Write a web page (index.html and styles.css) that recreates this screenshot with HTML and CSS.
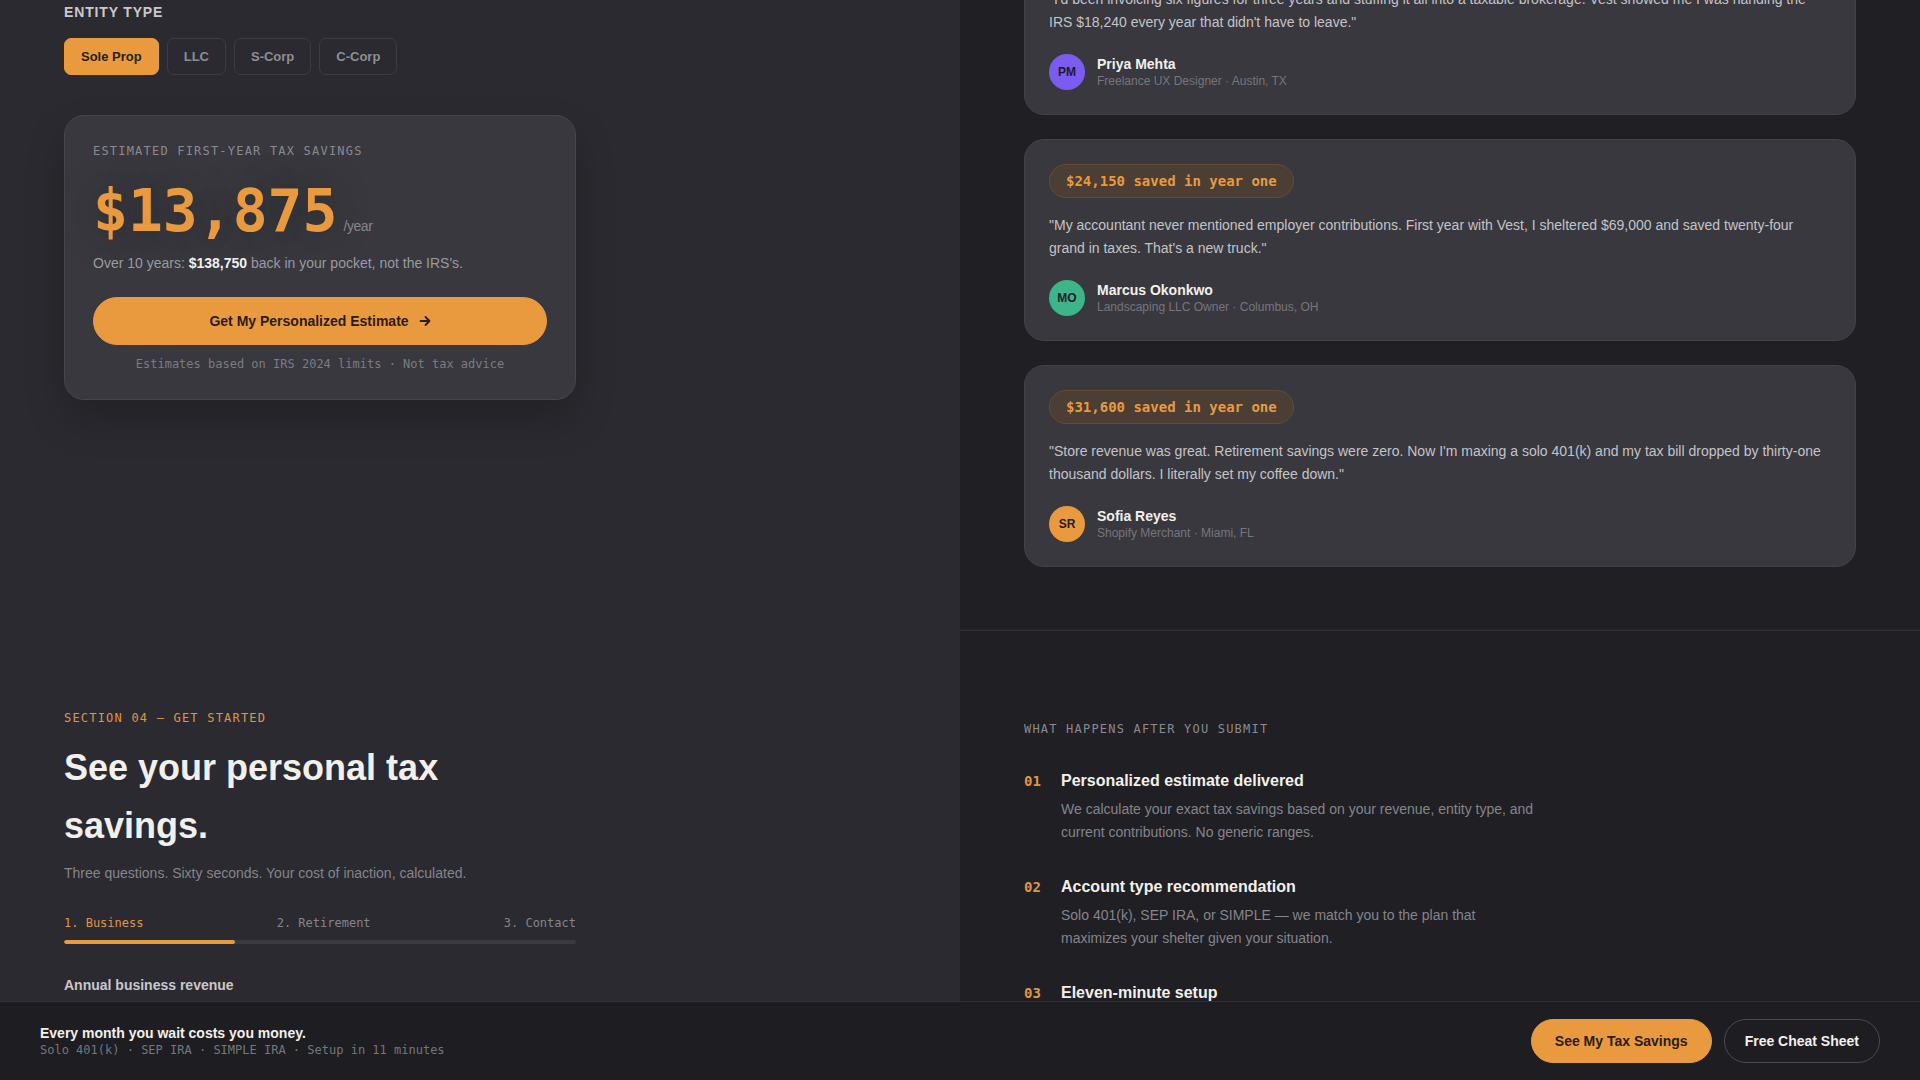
FILE: index.html
```html
<!DOCTYPE html>
<html lang="en">

<head>
  <meta charset="UTF-8">
  <meta name="viewport" content="width=device-width, initial-scale=1.0">
  <title>Vest - Retirement plans for the self-employed</title>
  <link rel="stylesheet" href="styles.css">
</head>

<body>
  <main class="page">
    <!-- Calculator + testimonials -->
    <section class="split">
      <div class="col col-light col-calc">
        <div class="field">
          <span class="field-label">Entity type</span>
          <div class="pills">
            <button class="pill is-active">Sole Prop</button>
            <button class="pill">LLC</button>
            <button class="pill">S-Corp</button>
            <button class="pill">C-Corp</button>
          </div>
        </div>

        <div class="result">
          <p class="result-label">Estimated first-year tax savings</p>
          <div class="result-amount">
            <span class="amount">$13,875</span>
            <span class="per">/year</span>
          </div>
          <p class="result-sub">Over 10 years: <strong>$138,750</strong> back in your pocket, not the IRS's.</p>
          <button class="btn btn-primary btn-block">
            Get My Personalized Estimate
            <svg class="arrow" width="12" height="12" viewBox="0 0 12 12" fill="none" stroke="currentColor" stroke-width="1.8" stroke-linecap="round" stroke-linejoin="round"><path d="M1.5 6h9M6.5 2l4 4-4 4"/></svg>
          </button>
          <p class="result-note">Estimates based on IRS 2024 limits &middot; Not tax advice</p>
        </div>
      </div>

      <div class="col col-quotes">
        <article class="quote-card">
          <span class="saved">$18,240 saved in year one</span>
          <p class="quote">"I'd been invoicing six figures for three years and stuffing it all into a taxable brokerage. Vest showed me I was handing the IRS $18,240 every year that didn't have to leave."</p>
          <div class="author">
            <span class="avatar avatar-purple">PM</span>
            <div>
              <p class="author-name">Priya Mehta</p>
              <p class="author-role">Freelance UX Designer &middot; Austin, TX</p>
            </div>
          </div>
        </article>

        <article class="quote-card">
          <span class="saved">$24,150 saved in year one</span>
          <p class="quote">"My accountant never mentioned employer contributions. First year with Vest, I sheltered $69,000 and saved twenty-four grand in taxes. That's a new truck."</p>
          <div class="author">
            <span class="avatar avatar-green">MO</span>
            <div>
              <p class="author-name">Marcus Okonkwo</p>
              <p class="author-role">Landscaping LLC Owner &middot; Columbus, OH</p>
            </div>
          </div>
        </article>

        <article class="quote-card">
          <span class="saved">$31,600 saved in year one</span>
          <p class="quote">"Store revenue was great. Retirement savings were zero. Now I'm maxing a solo 401(k) and my tax bill dropped by thirty-one thousand dollars. I literally set my coffee down."</p>
          <div class="author">
            <span class="avatar avatar-orange">SR</span>
            <div>
              <p class="author-name">Sofia Reyes</p>
              <p class="author-role">Shopify Merchant &middot; Miami, FL</p>
            </div>
          </div>
        </article>
      </div>
    </section>

    <!-- Section 04 -->
    <section class="split">
      <div class="col col-light col-start">
        <p class="eyebrow">Section 04 &mdash; Get started</p>
        <h2 class="start-title">See your personal tax savings.</h2>
        <p class="start-lead">Three questions. Sixty seconds. Your cost of inaction, calculated.</p>

        <div class="steps">
          <div class="step-labels">
            <span class="is-current">1. Business</span>
            <span>2. Retirement</span>
            <span>3. Contact</span>
          </div>
          <div class="progress"><div class="progress-fill" style="width: 33.33%"></div></div>
        </div>

        <label class="input-label" for="revenue">Annual business revenue</label>
        <input class="text-input" id="revenue" type="text" placeholder="$250,000">
      </div>

      <div class="col col-after">
        <p class="after-label">What happens after you submit</p>
        <ol class="after-list">
          <li class="after-item">
            <span class="after-num">01</span>
            <div>
              <h3 class="after-title">Personalized estimate delivered</h3>
              <p class="after-desc">We calculate your exact tax savings based on your revenue, entity type, and current contributions. No generic ranges.</p>
            </div>
          </li>
          <li class="after-item">
            <span class="after-num">02</span>
            <div>
              <h3 class="after-title">Account type recommendation</h3>
              <p class="after-desc">Solo 401(k), SEP IRA, or SIMPLE &mdash; we match you to the plan that maximizes your shelter given your situation.</p>
            </div>
          </li>
          <li class="after-item">
            <span class="after-num">03</span>
            <div>
              <h3 class="after-title">Eleven-minute setup</h3>
              <p class="after-desc">Open your account online, link your business bank, and start contributing the same day.</p>
            </div>
          </li>
        </ol>
      </div>
    </section>
  </main>

  <div class="cta-bar">
    <div>
      <p class="cta-title">Every month you wait costs you money.</p>
      <p class="cta-meta">Solo 401(k) &middot; SEP IRA &middot; SIMPLE IRA &middot; Setup in 11 minutes</p>
    </div>
    <div class="cta-actions">
      <button class="btn btn-primary">See My Tax Savings</button>
      <button class="btn btn-ghost">Free Cheat Sheet</button>
    </div>
  </div>
</body>

</html>
```

FILE: styles.css
```css
* {
  margin: 0;
  padding: 0;
  box-sizing: border-box;
}

body {
  font-family: "Liberation Sans", Arial, sans-serif;
  background-color: #1f1f24;
  color: #f2f0ec;
  overflow: hidden;
}

button,
input {
  font-family: inherit;
}

.result-label,
.result-note,
.saved,
.eyebrow,
.step-labels,
.after-label,
.after-num,
.cta-meta {
  font-family: "DejaVu Sans Mono", "Liberation Mono", monospace;
}

/* page starts scrolled into the testimonial column */
.page {
  margin-top: -87px;
  padding-bottom: 120px;
}

.split {
  display: grid;
  grid-template-columns: 1fr 1fr;
}

.col {
  padding-left: 64px;
  padding-right: 64px;
}

.col-light {
  background-color: #2a2a30;
}

/* calculator */
.col-calc {
  padding-top: 89px;
}

.field-label {
  display: block;
  font-size: 14px;
  line-height: 20px;
  font-weight: bold;
  letter-spacing: 0.06em;
  text-transform: uppercase;
  color: #c9c9cc;
}

.pills {
  display: flex;
  gap: 8px;
  margin-top: 16px;
}

.pill {
  padding: 10px 16px;
  font-size: 13px;
  line-height: 15px;
  font-weight: bold;
  color: #8e8e94;
  background: transparent;
  border: 1px solid #3c3c42;
  border-radius: 7px;
  cursor: pointer;
}

.pill.is-active {
  background-color: #e99a3e;
  border-color: #e99a3e;
  color: #2b1c0c;
}

.result {
  margin-top: 40px;
  max-width: 512px;
  padding: 28px;
  background-color: #38383e;
  border: 1px solid #45454b;
  border-radius: 20px;
  box-shadow: 0 20px 40px rgba(0, 0, 0, 0.2);
}

.result-label {
  font-size: 12px;
  line-height: 14px;
  letter-spacing: 0.1em;
  text-transform: uppercase;
  color: #8a8a90;
}

.result-amount {
  display: flex;
  align-items: baseline;
  gap: 6px;
  margin-top: 24px;
}

.amount {
  font-family: "DejaVu Sans Mono", "Liberation Mono", monospace;
  font-size: 58px;
  line-height: 1;
  font-weight: bold;
  color: #e99a3e;
  text-shadow: 0 0 36px rgba(24, 24, 34, 0.45);
}

.per {
  font-size: 14px;
  color: #86868c;
  letter-spacing: -0.03em;
}

.result-sub {
  margin-top: 12px;
  font-size: 14px;
  line-height: 22px;
  color: #9a9aa0;
}

.result-sub strong {
  color: #f2f0ec;
}

.btn {
  font-size: 14px;
  line-height: 18px;
  font-weight: bold;
  border-radius: 999px;
  cursor: pointer;
}

.btn-primary {
  padding: 12px 23px;
  background-color: #e99a3e;
  border: 1px solid #e99a3e;
  color: #2b1c0c;
}

.btn-primary:hover {
  background-color: #f0a851;
}

.btn-ghost {
  padding: 12px 20px;
  background: transparent;
  border: 1px solid #4a4a50;
  color: #f2f0ec;
}

.btn-block {
  display: flex;
  align-items: center;
  justify-content: center;
  gap: 10px;
  width: 100%;
  height: 48px;
  margin-top: 23px;
  border-radius: 24px;
}

.result-note {
  margin-top: 12px;
  font-size: 12px;
  line-height: 14px;
  text-align: center;
  color: #7c7c82;
}

/* testimonials */
.col-quotes {
  display: flex;
  flex-direction: column;
  gap: 24px;
  padding-bottom: 63px;
}

.quote-card {
  padding: 24px;
  background-color: #38383e;
  border: 1px solid #424248;
  border-radius: 20px;
}

.saved {
  display: inline-block;
  padding: 7px 16px;
  font-size: 14px;
  line-height: 18px;
  font-weight: bold;
  color: #e99a3e;
  background-color: #4a3e35;
  border: 1px solid #664b33;
  border-radius: 999px;
}

.quote {
  margin-top: 16px;
  font-size: 14px;
  line-height: 23px;
  color: #c4c4c8;
}

.author {
  display: flex;
  align-items: center;
  gap: 12px;
  margin-top: 20px;
}

.avatar {
  display: flex;
  align-items: center;
  justify-content: center;
  width: 36px;
  height: 36px;
  border-radius: 50%;
  font-size: 12px;
  font-weight: bold;
  color: #1e1c2a;
}

.avatar-purple {
  background-color: #7b5cf0;
}

.avatar-green {
  background-color: #3db48a;
}

.avatar-orange {
  background-color: #e99a3e;
}

.author-name {
  font-size: 14px;
  line-height: 18px;
  font-weight: bold;
  color: #f2f0ec;
}

.author-role {
  font-size: 12px;
  line-height: 16px;
  color: #76767c;
}

/* get started */
.col-start {
  padding-top: 80px;
  padding-bottom: 80px;
}

.eyebrow {
  font-size: 12px;
  line-height: 16px;
  letter-spacing: 0.1em;
  text-transform: uppercase;
  color: #e09540;
}

.start-title {
  max-width: 512px;
  margin-top: 13px;
  font-size: 36px;
  line-height: 58px;
  font-weight: bold;
  color: #f2f0ec;
}

.start-lead {
  margin-top: 7px;
  font-size: 14px;
  line-height: 22px;
  color: #85858b;
}

.steps {
  max-width: 512px;
  margin-top: 31px;
}

.step-labels {
  display: flex;
  justify-content: space-between;
  font-size: 12px;
  line-height: 16px;
  color: #85858b;
}

.step-labels .is-current {
  color: #e09540;
}

.progress {
  height: 4px;
  margin-top: 9px;
  background-color: #3a3a40;
  border-radius: 2px;
  overflow: hidden;
}

.progress-fill {
  height: 100%;
  background-color: #e99a3e;
  border-radius: 2px;
}

.input-label {
  display: block;
  margin-top: 31px;
  font-size: 14px;
  line-height: 20px;
  font-weight: bold;
  color: #c8c8cc;
}

.text-input {
  width: 100%;
  max-width: 512px;
  margin-top: 10px;
  padding: 14px 16px;
  font-size: 15px;
  color: #f2f0ec;
  background-color: #1f1f24;
  border: 1px solid #3c3c42;
  border-radius: 10px;
}

.col-after {
  padding-top: 90px;
  border-top: 1px solid #313137;
}

.after-label {
  font-size: 12px;
  line-height: 16px;
  letter-spacing: 0.1em;
  text-transform: uppercase;
  color: #8a8a90;
}

.after-list {
  display: flex;
  flex-direction: column;
  gap: 32px;
  margin-top: 33px;
  list-style: none;
}

.after-item {
  display: grid;
  grid-template-columns: 37px 1fr;
}

.after-num {
  font-size: 14px;
  line-height: 22px;
  font-weight: bold;
  color: #e09540;
}

.after-title {
  font-size: 16px;
  line-height: 22px;
  font-weight: bold;
  color: #f2f0ec;
}

.after-desc {
  max-width: 480px;
  margin-top: 6px;
  font-size: 14px;
  line-height: 23px;
  color: #85858b;
}

/* sticky call to action */
.cta-bar {
  position: fixed;
  left: 0;
  right: 0;
  bottom: 0;
  display: flex;
  align-items: center;
  justify-content: space-between;
  padding: 17px 40px;
  background-color: #1d1d22;
  border-top: 1px solid #2f2f35;
}

.cta-title {
  font-size: 14px;
  line-height: 18px;
  font-weight: bold;
  color: #f2f0ec;
}

.cta-meta {
  font-size: 12px;
  line-height: 16px;
  color: #76767c;
}

.cta-actions {
  display: flex;
  gap: 12px;
}
```
